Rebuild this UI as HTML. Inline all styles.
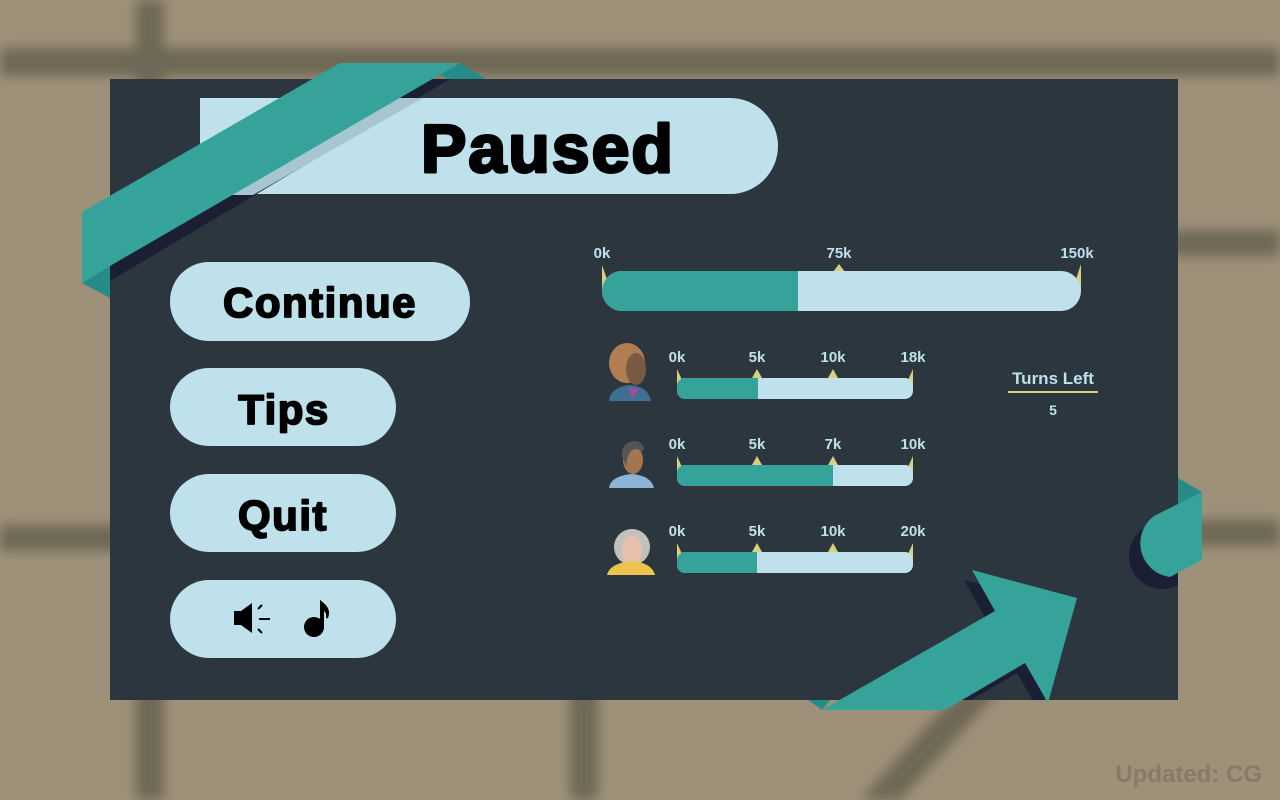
<!DOCTYPE html>
<html><head><meta charset="utf-8"><style>
html,body{margin:0;padding:0;width:1280px;height:800px;overflow:hidden;background:#9e917a}
svg{display:block}
text{font-family:"Liberation Sans",sans-serif;font-weight:bold}
</style></head><body>
<svg width="1280" height="800" viewBox="0 0 1280 800" xmlns="http://www.w3.org/2000/svg">
<defs>
<filter id="bl" x="-20%" y="-20%" width="140%" height="140%"><feGaussianBlur stdDeviation="6"/></filter>
<clipPath id="pc"><rect x="110" y="79" width="1068" height="621"/></clipPath>
</defs>
<rect width="1280" height="800" fill="#9e917a"/>
<g filter="url(#bl)" fill="#6e6854">
<rect x="0" y="48" width="1280" height="28"/>
<rect x="136" y="0" width="28" height="800"/>
<rect x="0" y="525" width="140" height="26"/>
<rect x="1170" y="230" width="110" height="26"/>
<rect x="1170" y="520" width="110" height="26"/>
<rect x="570" y="690" width="28" height="110"/>
<polygon points="960,690 1000,690 900,800 860,800"/>
</g>
<rect x="110" y="79" width="1068" height="621" fill="#2c363e"/>
<path d="M200,98 H730 A48,48 0 0 1 730,194 H200 Z" fill="#bee1eb"/>
<g clip-path="url(#pc)">
<polygon points="110,266 110,281 450,79 440,70" fill="#1a1f33"/>
</g>
<polygon points="232,195 253,195 423,98 393,98" fill="#a8c6d1"/>
<polygon points="82,212 340,63 460,63 110,266 82,283" fill="#35a39a"/>
<polygon points="82,283 110,266 110,298" fill="#258c88"/>
<polygon points="440,75 460,63 486,79 448,79" fill="#258c88"/>
<text x="548" y="172" font-size="68" text-anchor="middle" fill="#000" stroke="#000" stroke-width="3" stroke-linejoin="round" letter-spacing="2">Paused</text>
<g fill="#bee1eb">
<rect x="170" y="262" width="300" height="79" rx="39"/>
<rect x="170" y="368" width="226" height="78" rx="39"/>
<rect x="170" y="474" width="226" height="78" rx="39"/>
<rect x="170" y="580" width="226" height="78" rx="39"/>
</g>
<g fill="#000" font-size="42" text-anchor="middle" stroke="#000" stroke-width="1.8" stroke-linejoin="round" letter-spacing="1.5">
<text x="320" y="317">Continue</text>
<text x="284" y="424">Tips</text>
<text x="283" y="530">Quit</text>
</g>
<polygon points="234,611 241,611 252,603 252,633 241,625 234,625" fill="#000"/>
<g stroke="#000" stroke-width="2"><line x1="258" y1="609" x2="262" y2="605"/><line x1="259" y1="619" x2="270" y2="619"/><line x1="258" y1="629" x2="262" y2="633"/></g>
<ellipse cx="314" cy="627" rx="10" ry="10" fill="#000"/>
<path d="M321,627 V602 C326,606 330,610 327,618 C328,612 325,610 323,609 V627 Z" fill="#000" stroke="#000" stroke-width="2"/>
<g fill="#d9cf7e">
<polygon points="602,265 608,282 602,290"/>
<polygon points="839,264 845,272 833,272"/>
<polygon points="1081,264 1075,282 1081,290"/>
</g>
<rect x="602" y="271" width="479" height="40" rx="20" fill="#bee1eb"/>
<path d="M622,271 H798 V311 H622 A20,20 0 0 1 622,271 Z" fill="#35a39a"/>
<g fill="#bee1eb" font-size="15" text-anchor="middle">
<text x="602" y="258">0k</text><text x="839" y="258">75k</text><text x="1077" y="258">150k</text>
</g>
<g font-size="15" fill="#bee1eb" text-anchor="middle">
<text x="677" y="362">0k</text><text x="757" y="362">5k</text><text x="833" y="362">10k</text><text x="913" y="362">18k</text>
<text x="677" y="449">0k</text><text x="757" y="449">5k</text><text x="833" y="449">7k</text><text x="913" y="449">10k</text>
<text x="677" y="536">0k</text><text x="757" y="536">5k</text><text x="833" y="536">10k</text><text x="913" y="536">20k</text>
</g>
<g fill="#d9cf7e">
<polygon points="677,369 682,380 677,386"/><polygon points="757,369 762,378 752,378"/><polygon points="833,369 838,378 828,378"/><polygon points="913,369 908,380 913,386"/>
<polygon points="677,456 682,467 677,473"/><polygon points="757,456 762,465 752,465"/><polygon points="833,456 838,465 828,465"/><polygon points="913,456 908,467 913,473"/>
<polygon points="677,543 682,554 677,560"/><polygon points="757,543 762,552 752,552"/><polygon points="833,543 838,552 828,552"/><polygon points="913,543 908,554 913,560"/>
</g>
<rect x="677" y="378" width="236" height="21" rx="8" fill="#bee1eb"/>
<path d="M685,378 H758 V399 H685 A8,8 0 0 1 677,391 V386 A8,8 0 0 1 685,378 Z" fill="#35a39a"/>
<rect x="677" y="465" width="236" height="21" rx="8" fill="#bee1eb"/>
<path d="M685,465 H833 V486 H685 A8,8 0 0 1 677,478 V473 A8,8 0 0 1 685,465 Z" fill="#35a39a"/>
<rect x="677" y="552" width="236" height="21" rx="8" fill="#bee1eb"/>
<path d="M685,552 H757 V573 H685 A8,8 0 0 1 677,565 V560 A8,8 0 0 1 685,552 Z" fill="#35a39a"/>
<g>
<ellipse cx="627" cy="363" rx="18" ry="20" fill="#b07e50"/>
<ellipse cx="636" cy="369" rx="10" ry="16" fill="#7a5a44"/>
<path d="M609,401 C610,390 620,386 630,385 C642,386 649,391 651,401 Z" fill="#3f6f93"/>
<path d="M628,388 L633,399 L639,388 Z" fill="#9a4fa0"/>
</g>
<g>
<ellipse cx="633" cy="460" rx="10" ry="14" fill="#a57550"/>
<path d="M622,456 C620,440 640,436 644,448 L642,452 C636,446 628,448 626,466 Z" fill="#555"/>
<path d="M609,488 C610,479 620,475 632,474 C645,475 652,480 654,488 Z" fill="#8db4d6"/>
</g>
<g>
<circle cx="632" cy="547" r="18" fill="#c2c2bc"/>
<ellipse cx="632" cy="550" rx="10" ry="14" fill="#e8c0ac"/>
<path d="M607,575 C609,566 620,562 632,561 C645,562 653,567 655,575 Z" fill="#edc24f"/>
</g>
<text x="1053" y="384" font-size="17" fill="#bee1eb" text-anchor="middle">Turns Left</text>
<rect x="1008" y="391" width="90" height="2" fill="#d9cf7e"/>
<text x="1053" y="415" font-size="14" fill="#bee1eb" text-anchor="middle">5</text>
<g clip-path="url(#pc)">
<polygon points="964,580 1069,608 1040,713 1017,673 937,720 814,720 987,621" fill="#1a1f33"/>
<circle cx="1162" cy="556" r="33" fill="#1a1f33"/>
</g>
<polygon points="1178,478 1202,492 1178,506" fill="#258c88"/>
<path d="M1202,492 V560 L1170,577 A34,34 0 0 1 1154,516 Z" fill="#35a39a"/>
<polygon points="972,570 1077,598 1048,703 1025,663 945,710 822,710 995,611" fill="#35a39a"/>
<polygon points="808,700 822,710 830,700" fill="#258c88"/>
<text x="1262" y="782" font-size="24" fill="#857b66" text-anchor="end">Updated: CG</text>
</svg>
</body></html>
